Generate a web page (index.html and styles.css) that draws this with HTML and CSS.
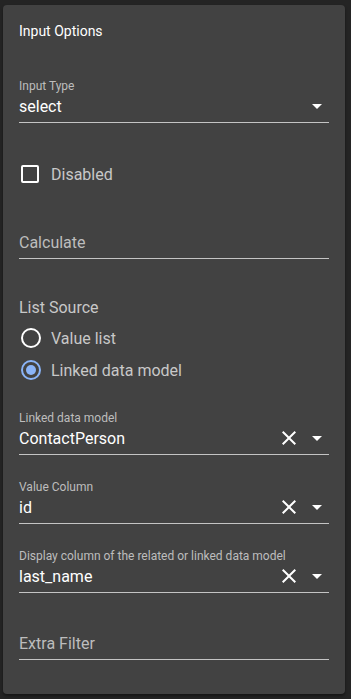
FILE: index.html
```html
<!DOCTYPE html>
<html lang="en">
<head>
    <meta charset="UTF-8">
    <meta name="viewport" content="width=device-width, initial-scale=1.0">
    <title>Input Options</title>
    <link rel="stylesheet" href="styles.css">
</head>
<body>
    <div class="card">
        <div class="card-title">Input Options</div>

        <!-- Input type -->
        <div class="field field-type">
            <div class="field-label">Input Type</div>
            <div class="field-row">
                <span class="field-value">select</span>
                <svg class="icon" viewBox="0 0 24 24"><path d="M7 10l5 5 5-5z"/></svg>
            </div>
        </div>

        <!-- Disabled checkbox -->
        <div class="check-row">
            <span class="checkbox"></span>
            <span class="option-text">Disabled</span>
        </div>

        <!-- Calculate -->
        <div class="field field-calc">
            <div class="field-row">
                <span class="field-placeholder">Calculate</span>
            </div>
        </div>

        <!-- List source -->
        <div class="list-source">
            <div class="group-label">List Source</div>
            <div class="radio-row">
                <span class="radio"></span>
                <span class="option-text">Value list</span>
            </div>
            <div class="radio-row">
                <span class="radio checked"></span>
                <span class="option-text">Linked data model</span>
            </div>
        </div>

        <div class="field field-linked">
            <div class="field-label">Linked data model</div>
            <div class="field-row">
                <span class="field-value">ContactPerson</span>
                <svg class="icon" viewBox="0 0 24 24"><path d="M19 6.41L17.59 5 12 10.59 6.41 5 5 6.41 10.59 12 5 17.59 6.41 19 12 13.41 17.59 19 19 17.59 13.41 12z"/></svg>
                <svg class="icon" viewBox="0 0 24 24"><path d="M7 10l5 5 5-5z"/></svg>
            </div>
        </div>

        <div class="field field-next">
            <div class="field-label">Value Column</div>
            <div class="field-row">
                <span class="field-value">id</span>
                <svg class="icon" viewBox="0 0 24 24"><path d="M19 6.41L17.59 5 12 10.59 6.41 5 5 6.41 10.59 12 5 17.59 6.41 19 12 13.41 17.59 19 19 17.59 13.41 12z"/></svg>
                <svg class="icon" viewBox="0 0 24 24"><path d="M7 10l5 5 5-5z"/></svg>
            </div>
        </div>

        <div class="field field-next">
            <div class="field-label">Display column of the related or linked data model</div>
            <div class="field-row">
                <span class="field-value">last_name</span>
                <svg class="icon" viewBox="0 0 24 24"><path d="M19 6.41L17.59 5 12 10.59 6.41 5 5 6.41 10.59 12 5 17.59 6.41 19 12 13.41 17.59 19 19 17.59 13.41 12z"/></svg>
                <svg class="icon" viewBox="0 0 24 24"><path d="M7 10l5 5 5-5z"/></svg>
            </div>
        </div>

        <!-- Extra filter -->
        <div class="field field-filter">
            <div class="field-row">
                <span class="field-placeholder">Extra Filter</span>
            </div>
        </div>
    </div>
</body>
</html>
```

FILE: styles.css
```css
body {
    font-family: Roboto, "Liberation Sans", sans-serif;
    margin: 0;
    padding: 5px 6px 6px 3px;
    background-color: #242424;
    color: #fff;
}

.card {
    background: #424242;
    border-radius: 4px;
    padding: 16px 16px 34px 16px;
    box-shadow: 0 2px 3px rgba(0, 0, 0, 0.4);
}

.card-title {
    font-size: 14px;
    line-height: 20px;
}

.field {
    border-bottom: 1px solid #c4c4c4;
    padding-bottom: 4px;
}

.field-type {
    margin-top: 37px;
}

.field-calc {
    margin-top: 44px;
}

.field-linked {
    margin-top: 24px;
}

.field-next {
    margin-top: 24px;
}

.field-filter {
    margin-top: 38px;
}

.field-label {
    font-size: 12px;
    line-height: 16px;
    color: #bdbdbd;
    white-space: nowrap;
}

.field-row {
    display: flex;
    align-items: center;
    height: 24px;
}

.field-value {
    flex: 1;
    font-size: 16px;
    color: #fff;
}

.field-placeholder {
    flex: 1;
    font-size: 16px;
    color: #bdbdbd;
}

.icon {
    width: 24px;
    height: 24px;
    fill: #fff;
    flex: none;
}

.icon + .icon {
    margin-left: 4px;
}

.check-row {
    display: flex;
    align-items: center;
    height: 24px;
    margin-top: 39px;
}

.checkbox {
    width: 14px;
    height: 14px;
    border: 2px solid #fff;
    border-radius: 2px;
    margin-left: 2px;
}

.option-text {
    font-size: 16px;
    color: #c8c8c8;
    margin-left: 12px;
}

.list-source {
    margin-top: 37px;
}

.group-label {
    font-size: 16px;
    line-height: 24px;
    color: #c8c8c8;
    margin-bottom: 2px;
}

.radio-row {
    display: flex;
    align-items: center;
    height: 32px;
}

.radio {
    position: relative;
    width: 16px;
    height: 16px;
    border: 2px solid #fff;
    border-radius: 50%;
    margin-left: 2px;
}

.radio + .option-text {
    margin-left: 10px;
}

.radio.checked {
    border-color: #8ab4f8;
}

.radio.checked::after {
    content: "";
    position: absolute;
    left: 3px;
    top: 3px;
    width: 10px;
    height: 10px;
    border-radius: 50%;
    background: #8ab4f8;
}
```
